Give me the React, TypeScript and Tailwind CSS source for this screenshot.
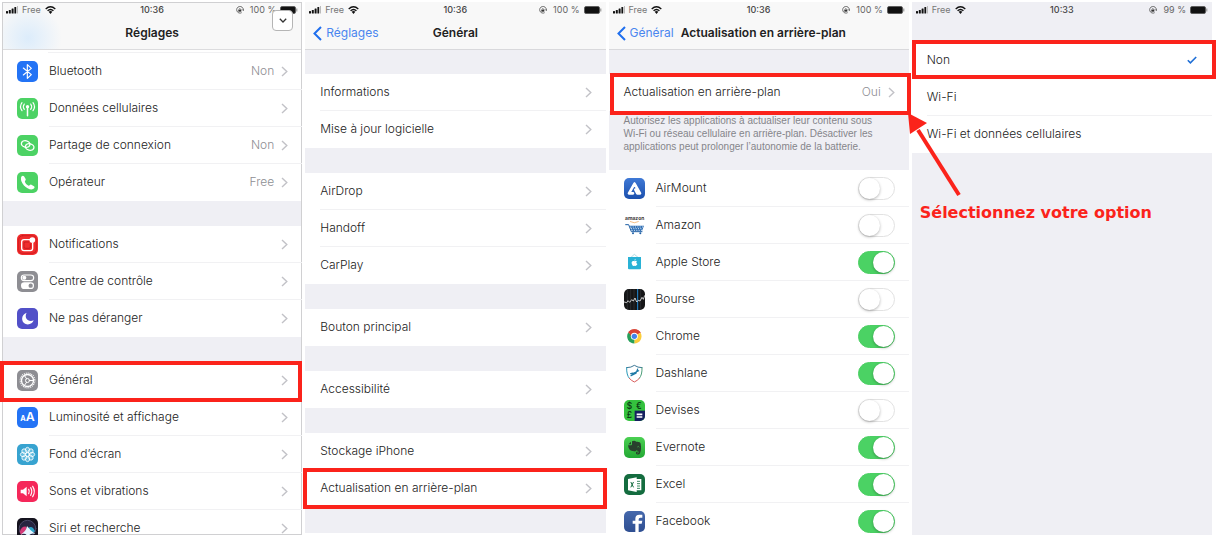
import { useState, type ReactNode } from "react";
import clsx from "clsx";

/* ---------- icons ---------- */

interface TileProps {
    className?: string;
    children: ReactNode;
}

function Tile({ className, children }: TileProps) {
    return (
        <svg
            viewBox="0 0 63 63"
            className={clsx("size-[21px] shrink-0 rounded-[5px]", className)}
            fill="none"
            stroke="#fff"
            strokeWidth={4}
            strokeLinecap="round"
            strokeLinejoin="round"
            aria-hidden="true"
        >
            {children}
        </svg>
    );
}

const BluetoothIcon = () => (
    <Tile className="bg-[#2373f5]">
        <path d="M19 21 L43 41 L31 52 V11 L43 22 L19 42" strokeWidth={3.5} />
    </Tile>
);

const CellularIcon = () => (
    <Tile className="bg-[#4cd264]">
        <path d="M31.500 30 V53" strokeWidth={4.500} />
        <circle cx="31.500" cy="26" r="5" fill="#fff" stroke="none" />
        <path d="M22 18 Q16 26 22 34 M15 14 Q6 26 15 38 M41 18 Q47 26 41 34 M48 14 Q57 26 48 38" strokeWidth={3.500} />
    </Tile>
);

const HotspotIcon = () => (
    <Tile className="bg-[#4cd264]">
        <ellipse cx="26" cy="27" rx="13" ry="9.500" transform="rotate(12 26 27)" />
        <ellipse cx="38" cy="36" rx="13" ry="9.500" transform="rotate(12 38 36)" />
    </Tile>
);

const PhoneIcon = () => (
    <Tile className="bg-[#4cd264]">
        <path
            d="M12 17 C13 12 18 9 21 13 L26 21 C28 25 22 27 24 30 C26 35 30 39 35 41 C38 42 39 36 43 38 L51 43 C55 46 51 51 46 52 C30 54 9 32 12 17 Z"
            fill="#fff"
            stroke="none"
        />
    </Tile>
);

const NotificationsIcon = () => (
    <Tile className="bg-[#f02d2d]">
        <rect x="5" y="5" width="53" height="53" rx="12" stroke="#c4161c" strokeWidth={2} />
        <path d="M38 17 H21 Q14 17 14 24 V43 Q14 50 21 50 H40 Q47 50 47 43 V27" strokeWidth={4} />
        <path d="M35 24 H25 Q21 24 21 28 V39 Q21 43 25 43 H36 Q40 43 40 39 V29" stroke="#b51218" strokeWidth={2} />
        <circle cx="46" cy="18" r="8.500" fill="#fff" stroke="none" />
    </Tile>
);

const ControlCenterIcon = () => (
    <Tile className="bg-[#8e8e93]">
        <rect x="13" y="12" width="37" height="17" rx="8.500" strokeWidth={3.500} />
        <circle cx="22" cy="20.500" r="6" fill="#fff" stroke="none" />
        <rect x="12" y="34" width="39" height="20" rx="10" fill="#fff" stroke="none" />
        <circle cx="41" cy="44" r="6.500" fill="#8e8e93" stroke="none" />
    </Tile>
);

const MoonIcon = () => (
    <Tile className="bg-[#5250c8]">
        <path d="M29 14 C12 19 11 42 26 48 C36 52 47 46 50 37 C34 44 20 30 29 14 Z" fill="#fff" stroke="none" />
    </Tile>
);

const GearIcon = () => (
    <Tile className="bg-[#8e8e93]">
        <circle cx="31.500" cy="31.500" r="22" strokeWidth={4} strokeDasharray="2.600 3.160" strokeLinecap="butt" />
        <circle cx="31.500" cy="31.500" r="18" strokeWidth={4} />
        <circle cx="31.500" cy="31.500" r="6" strokeWidth={3} />
        <path d="M37 31.500 H49 M28.500 26 L22 16 M28.500 37 L22 47" strokeWidth={3} />
    </Tile>
);

const DisplayIcon = () => (
    <Tile className="bg-[#2373f5]">
        <text x="10" y="43" fontSize="22" fontWeight="700" fill="#fff" stroke="none" fontFamily="Inter, sans-serif">A</text>
        <text x="26" y="43" fontSize="37" fontWeight="600" fill="#fff" stroke="none" fontFamily="Inter, sans-serif">A</text>
    </Tile>
);

const WallpaperIcon = () => (
    <Tile className="bg-[#37a3d0]">
        {[0, 45, 90, 135, 180, 225, 270, 315].map((angle) => (
            <ellipse
                key={angle}
                cx="31.500"
                cy="18"
                rx="6.500"
                ry="8"
                strokeWidth={2.5}
                fill="#8fd3ec"
                fillOpacity={0.5}
                transform={`rotate(${angle} 31.5 31.5)`}
            />
        ))}
        <circle cx="31.500" cy="31.500" r="5.500" strokeWidth={2.500} />
    </Tile>
);

const SoundIcon = () => (
    <Tile className="bg-[#f5285a]">
        <path d="M11 26 H18 L29 17 V46 L18 37 H11 Z" fill="#fff" stroke="none" />
        <path d="M35 25 Q39 31.500 35 38 M41 20 Q48 31.500 41 43 M47 16 Q57 31.500 47 47" strokeWidth={3.500} />
    </Tile>
);

const SiriIcon = () => (
    <Tile className="bg-[#15131f]">
        <circle cx="31.500" cy="32" r="25" stroke="#4d4a68" strokeWidth={3} fill="#272440" />
        <path d="M8 42 Q14 24 27 26 L31 34 Q22 46 12 50 Z" fill="#d23a78" stroke="none" />
        <path d="M33 30 Q46 20 54 40 L44 48 Z" fill="#2fa6c9" stroke="none" />
        <path d="M30 24 Q38 36 55 48 Q40 42 32 58 Q28 42 10 50 Q28 40 30 24 Z" fill="#e6f4ff" stroke="none" />
    </Tile>
);

const AirMountIcon = () => (
    <Tile className="bg-linear-to-b from-[#3f79d6] to-[#1c50ad]">
        <path d="M31.500 17 L15 46 H27 M31.500 17 L48 46 H40 L34 35" strokeWidth={8} />
    </Tile>
);

const AmazonIcon = () => (
    <Tile>
        <text x="3" y="15" fontSize="15" fontWeight="700" fill="#3c3a3a" stroke="none" fontFamily="Inter, sans-serif">amazon</text>
        <path d="M19 20 Q31 27 43 20" stroke="#f0a04b" strokeWidth={2} />
        <path d="M5 29 H14 L22 50 H54" stroke="#1f5fa5" strokeWidth={3} />
        <path d="M17 32 H60 L54 48 H23 Z" fill="#2b6cb3" stroke="none" />
        <path d="M20 36 H58 M22 41 H56 M24 46 H54" stroke="#fff" strokeWidth={2.500} strokeDasharray="1 6" />
        <circle cx="27" cy="55" r="3" fill="#1f5fa5" stroke="none" />
        <circle cx="49" cy="55" r="3" fill="#1f5fa5" stroke="none" />
    </Tile>
);

const AppleStoreIcon = () => (
    <Tile>
        <path d="M21 16 L31 7 L42 16" stroke="#8ccbd8" strokeWidth={2} />
        <path d="M12 15 H51 V49 Q51 52 48 52 H15 Q12 52 12 49 Z" fill="#29b2d6" stroke="none" />
        <path
            d="M31 28 C26 25 22 29 23 34 C24 39 27 43 29 42 Q31 41 33 42 C36 43 39 39 40 36 C36 34 36 30 39 28 C37 25 34 26 31 28 Z M31 26 Q31 21 35 20 Q35 25 31 26 Z"
            fill="#fff"
            stroke="none"
        />
    </Tile>
);

const StocksIcon = () => (
    <Tile className="bg-[#151617]">
        <path d="M10 0 V63 M20 0 V63 M30 0 V63 M50 0 V63" stroke="#34373a" strokeWidth={2} />
        <path d="M41 0 V63" stroke="#2089d5" strokeWidth={3} />
        <path d="M1 39 L8 41 L12 35 L17 40 L23 32 L28 36 L33 27 L38 39 L43 34 L48 36 L54 25 L58 31 L62 20" strokeWidth={2.500} stroke="#ececec" />
    </Tile>
);

const ChromeIcon = () => (
    <Tile>
        <path d="M31 31 L12.300 20.200 A21.600 21.600 0 0 1 49.700 20.200 Z" fill="#d94335" stroke="none" />
        <path d="M31 31 L49.700 20.200 A21.600 21.600 0 0 1 31 52.600 Z" fill="#fccd3b" stroke="none" />
        <path d="M31 31 L31 52.600 A21.600 21.600 0 0 1 12.300 20.200 Z" fill="#27a05a" stroke="none" />
        <path d="M31 21 H50 L49.700 20.200 A21.600 21.600 0 0 0 14 18 L22 33 Z" fill="#d94335" stroke="none" />
        <circle cx="31" cy="31" r="10.500" fill="#fff" stroke="none" />
        <circle cx="31" cy="31" r="8" fill="#4182ec" stroke="none" />
    </Tile>
);

const DashlaneIcon = () => (
    <Tile>
        <path d="M8 14 Q22 14 31 7 Q41 14 54 14" stroke="#3c7795" strokeWidth={3} />
        <path d="M8 14 Q7 36 16 46" stroke="#2998b8" strokeWidth={3} />
        <path d="M54 14 Q55 36 46 46" stroke="#4c9e7a" strokeWidth={3} />
        <path d="M16 46 Q22 53 31 57 Q40 53 46 46" stroke="#d85b5a" strokeWidth={3} />
        <path d="M41 18 L36 31 L21 38 L30 30 L44 23 M20 32 L27 30" stroke="#1f7aa6" strokeWidth={3.500} />
    </Tile>
);

const CurrencyIcon = () => (
    <Tile className="bg-[#34c13e]">
        <rect x="32" y="32" width="31" height="31" fill="#14205f" stroke="none" />
        <path d="M38 43 H55 M38 51 H55" strokeWidth={5} strokeLinecap="butt" />
        <g fill="#0c3e15" stroke="none" fontSize="25" fontWeight="600" fontFamily="Inter, sans-serif">
            <text x="8" y="26">$</text>
            <text x="36" y="26">€</text>
            <text x="8" y="55">£</text>
        </g>
    </Tile>
);

const EvernoteIcon = () => (
    <Tile className="bg-linear-to-b from-[#4ad052] to-[#22a834]">
        <path
            d="M24 13 Q31 9 37 14 Q49 13 50 20 Q53 38 48 49 Q46 54 38 52 Q35 51 36 46 Q37 43 42 44 V47 Q39 46 39 49 Q43 50 44 46 Q44 41 37 40 Q36 44 31 43 Q18 43 14 33 L12 25 H22 Q24 24 24 21 Z"
            fill="#29402d"
            stroke="none"
        />
        <path d="M13 22 L21 14 V22 Z" fill="#29402d" stroke="none" />
        <path d="M41 29 Q43 26 45 30" stroke="#4ad052" strokeWidth={2} />
    </Tile>
);

const ExcelIcon = () => (
    <Tile className="bg-[#146c3f]">
        <path d="M35 15 H52 V49 H35 Z" fill="#fff" stroke="none" />
        <path d="M39 22 H48 M39 29 H48 M39 36 H48 M39 43 H48" stroke="#3c8a62" strokeWidth={3} strokeLinecap="butt" />
        <path d="M12 15 L38 10 V54 L12 49 Z" fill="#fff" stroke="none" />
        <path d="M21 25 L28 39 M28 25 L21 39" stroke="#146c3f" strokeWidth={3} />
    </Tile>
);

const FacebookIcon = () => (
    <Tile className="bg-linear-to-b from-[#4568ac] to-[#2f4f92]">
        <path
            d="M34 63 V38 H26 V29 H34 V23 Q34 11 46 11 H55 V20 H49 Q44 20 44 25 V29 H55 L53 38 H44 V63 Z"
            fill="#fff"
            stroke="none"
        />
    </Tile>
);

const Chevron = () => (
    <svg viewBox="0 0 7 11" className="h-[11px] w-[7px] shrink-0" fill="none" stroke="#c2c2c7" strokeWidth={1.4} aria-hidden="true">
        <path d="M1 1 L5.800 5.500 L1 10" />
    </svg>
);

/* ---------- building blocks ---------- */

function StatusBar({ time, battery }: { time: string; battery: string }) {
    return (
        <div className="grid h-[15px] grid-cols-[1fr_auto_1fr] items-center px-1 text-[9px] leading-none font-normal text-[#444]">
            <div className="flex items-center gap-1">
                <svg viewBox="0 0 12 8" className="h-2 w-3" fill="#111" aria-hidden="true">
                    <rect x="0" y="5" width="2" height="2.500" rx=".5" />
                    <rect x="2.800" y="4" width="2" height="3.500" rx=".5" />
                    <rect x="5.600" y="2.500" width="2" height="5" rx=".5" />
                    <rect x="8.400" y="1" width="1.800" height="6.500" rx=".5" />
                    <rect x="11" y="0" width="1" height="7.500" fill="#bbb" />
                </svg>
                <span className="text-[#777]">Free</span>
                <svg viewBox="0 0 20 15" className="h-2 w-[11px]" fill="none" stroke="#111" strokeWidth={2.6} aria-hidden="true">
                    <path d="M1 5.500 Q10 -2.500 19 5.500 M4.500 9 Q10 4 15.500 9" />
                    <path d="M6.500 11 Q10 8 13.500 11 L10 15 Z" fill="#111" stroke="none" />
                </svg>
            </div>
            <span className="font-medium">{time}</span>
            <div className="flex items-center justify-end gap-1 text-[#666]">
                <svg viewBox="0 0 24 24" className="mr-0.5 size-2" fill="none" stroke="#555" strokeWidth={2.5} aria-hidden="true">
                    <path d="M17 20 A10 10 0 1 1 22 11 M18 10 L22 14 L24 9" />
                    <rect x="7" y="11" width="9" height="6" fill="#333" stroke="none" />
                    <path d="M9 11 V9 Q11.500 5 14 9 V11" strokeWidth={2} />
                </svg>
                <span>{battery}</span>
                <svg viewBox="0 0 18 8" className="h-2 w-[18px]" aria-hidden="true">
                    <rect x=".5" y=".5" width="15" height="7" rx="1.500" fill="#111" stroke="#555" strokeWidth=".8" />
                    <path d="M16.800 2.500 V5.500" stroke="#888" strokeWidth="1" />
                </svg>
            </div>
        </div>
    );
}

function BackButton({ label }: { label: string }) {
    return (
        <button type="button" className="flex items-center gap-1 font-normal text-[#4a86ef]">
            <svg viewBox="0 0 9 15" className="h-[15px] w-[9px]" fill="none" stroke="#1f6fee" strokeWidth={2} aria-hidden="true">
                <path d="M8 1 L1.500 7.500 L8 14" />
            </svg>
            {label}
        </button>
    );
}

// Red frame drawn around a row
function Highlight({ className }: { className: string }) {
    return <span className={clsx("pointer-events-none absolute z-10 border-4 border-[#fb231b]", className)} />;
}

interface RowProps {
    label: string;
    icon?: ReactNode;
    value?: string;
    highlight?: string;
}

function Row({ label, icon, value, highlight }: RowProps) {
    return (
        <li className="group relative">
            <button type="button" className="flex h-[37px] w-full items-center gap-[11px] pl-[15px] text-left">
                {icon}
                <span className="flex h-full flex-1 items-center gap-[7px] border-b border-[#f1f1f3] pr-[14px] group-last:border-transparent">
                    <span className="flex-1">{label}</span>
                    {value && <span className="text-[#8e8e93]">{value}</span>}
                    <Chevron />
                </span>
            </button>
            {highlight && <Highlight className={highlight} />}
        </li>
    );
}

function Section({ rows }: { rows: RowProps[] }) {
    return (
        <ul className="bg-white">
            {rows.map((row) => (
                <Row key={row.label} {...row} />
            ))}
        </ul>
    );
}

interface AppRowProps {
    label: string;
    icon: ReactNode;
    enabled: boolean;
}

function AppRow({ label, icon, enabled }: AppRowProps) {
    const [checked, setChecked] = useState(enabled);

    return (
        <li className="group">
            <label className="flex h-[37px] items-center gap-[11px] pl-[15px]">
                {icon}
                <span className="flex h-full flex-1 items-center justify-between border-b border-[#f1f1f3] pr-[14px] group-last:border-transparent">
                    {label}
                    <input
                        type="checkbox"
                        checked={checked}
                        onChange={(e) => setChecked(e.target.checked)}
                        className="h-[23px] w-[37px] appearance-none rounded-full border border-[#e2e2e2] bg-white before:block before:size-[21px] before:rounded-full before:bg-white before:shadow-[0_1px_3px_rgba(0,0,0,0.3)] checked:border-[#4bcf63] checked:bg-[#4bd264] checked:before:ml-[14px]"
                    />
                </span>
            </label>
        </li>
    );
}

/* ---------- data ---------- */

const networkRows: RowProps[] = [
    { label: "Bluetooth", icon: <BluetoothIcon />, value: "Non" },
    { label: "Données cellulaires", icon: <CellularIcon /> },
    { label: "Partage de connexion", icon: <HotspotIcon />, value: "Non" },
    { label: "Opérateur", icon: <PhoneIcon />, value: "Free" },
];

const alertRows: RowProps[] = [
    { label: "Notifications", icon: <NotificationsIcon /> },
    { label: "Centre de contrôle", icon: <ControlCenterIcon /> },
    { label: "Ne pas déranger", icon: <MoonIcon /> },
];

const deviceRows: RowProps[] = [
    { label: "Général", icon: <GearIcon />, highlight: "-top-px -bottom-[3px] -left-0.5 right-0" },
    { label: "Luminosité et affichage", icon: <DisplayIcon /> },
    { label: "Fond d’écran", icon: <WallpaperIcon /> },
    { label: "Sons et vibrations", icon: <SoundIcon /> },
    { label: "Siri et recherche", icon: <SiriIcon /> },
];

const generalSections: RowProps[][] = [
    [{ label: "Informations" }, { label: "Mise à jour logicielle" }],
    [{ label: "AirDrop" }, { label: "Handoff" }, { label: "CarPlay" }],
    [{ label: "Bouton principal" }],
    [{ label: "Accessibilité" }],
    [
        { label: "Stockage iPhone" },
        { label: "Actualisation en arrière-plan", highlight: "-inset-y-0.5 -left-0.5 -right-px" },
    ],
];

const apps: AppRowProps[] = [
    { label: "AirMount", icon: <AirMountIcon />, enabled: false },
    { label: "Amazon", icon: <AmazonIcon />, enabled: false },
    { label: "Apple Store", icon: <AppleStoreIcon />, enabled: true },
    { label: "Bourse", icon: <StocksIcon />, enabled: false },
    { label: "Chrome", icon: <ChromeIcon />, enabled: true },
    { label: "Dashlane", icon: <DashlaneIcon />, enabled: true },
    { label: "Devises", icon: <CurrencyIcon />, enabled: false },
    { label: "Evernote", icon: <EvernoteIcon />, enabled: true },
    { label: "Excel", icon: <ExcelIcon />, enabled: true },
    { label: "Facebook", icon: <FacebookIcon />, enabled: true },
];

const refreshOptions = ["Non", "Wi-Fi", "Wi-Fi et données cellulaires"];

/* ---------- screens ---------- */

function SettingsScreen() {
    return (
        <section className="relative overflow-y-clip bg-[#efeff4] outline -outline-offset-1 outline-[#d0d0d2]">
            <header className="border-b border-[#dcdcde] bg-[#f8f8f8] bg-[radial-gradient(circle_at_26px_36px,#dcecfb,transparent_34px)]">
                <StatusBar time="10:36" battery="100 %" />
                <h1 className="flex h-8 items-center justify-center font-semibold text-[#222]">Réglages</h1>
            </header>
            <button
                type="button"
                aria-label="Réduire"
                className="absolute top-2 right-[9px] flex size-[21px] items-center justify-center rounded-[4px] border border-[#b5b5b5] bg-white"
            >
                <svg viewBox="0 0 8 5" className="h-[5px] w-2" fill="none" stroke="#333" strokeWidth={1.3} aria-hidden="true">
                    <path d="M.8 .8 L4 4 L7.200 .8" />
                </svg>
            </button>
            <div className="bg-white pt-0.5 pl-[46px]">
                <div className="border-b border-[#f1f1f3]" />
            </div>
            <div className="flex flex-col gap-[25px]">
                <Section rows={networkRows} />
                <Section rows={alertRows} />
                <Section rows={deviceRows} />
            </div>
        </section>
    );
}

function GeneralScreen() {
    return (
        <section className="mb-0.5 bg-[#efeff4]">
            <header className="border-b border-[#d9d9dc] bg-[#f8f8f8]">
                <StatusBar time="10:36" battery="100 %" />
                <div className="grid h-8 grid-cols-[1fr_auto_1fr] items-center px-2">
                    <BackButton label="Réglages" />
                    <h2 className="font-semibold text-[#222]">Général</h2>
                </div>
            </header>
            <div className="flex flex-col gap-[25px] pt-6">
                {generalSections.map((rows) => (
                    <Section key={rows[0].label} rows={rows} />
                ))}
            </div>
        </section>
    );
}

function BackgroundRefreshScreen() {
    return (
        <section className="overflow-y-clip bg-[#efeff4]">
            <header className="border-b border-[#d9d9dc] bg-[#f8f8f8]">
                <StatusBar time="10:36" battery="100 %" />
                <div className="flex h-8 items-center gap-[7px] px-2">
                    <BackButton label="Général" />
                    <h2 className="font-semibold text-[#222]">Actualisation en arrière-plan</h2>
                </div>
            </header>
            <div className="pt-6">
                <Section
                    rows={[
                        {
                            label: "Actualisation en arrière-plan",
                            value: "Oui",
                            highlight: "-top-px -bottom-1 left-px -right-0.5",
                        },
                    ]}
                />
            </div>
            <p className="px-[15px] pt-[3px] pb-[17px] font-['Liberation_Sans',Arial,sans-serif] text-[10px] leading-[13px] font-normal text-[#85858a]">
                Autorisez les applications à actualiser leur contenu sous
                <br />
                Wi-Fi ou réseau cellulaire en arrière-plan. Désactiver les
                <br />
                applications peut prolonger l’autonomie de la batterie.
            </p>
            <ul className="bg-white">
                {apps.map((app) => (
                    <AppRow key={app.label} {...app} />
                ))}
            </ul>
        </section>
    );
}

function RefreshOptionsScreen() {
    const [selected, setSelected] = useState("Non");

    return (
        <section className="relative bg-[#efeff4]">
            <StatusBar time="10:33" battery="99 %" />
            <fieldset className="mt-[25px] bg-white">
                {refreshOptions.map((option, index) => (
                    <label key={option} className="group relative flex h-[37px] pl-[15px]">
                        <input
                            type="radio"
                            name="refresh"
                            className="sr-only"
                            checked={selected === option}
                            onChange={() => setSelected(option)}
                        />
                        <span className="flex flex-1 items-center justify-between border-b border-[#f1f1f3] pr-[15px] group-last:border-transparent">
                            {option}
                            {selected === option && (
                                <svg viewBox="0 0 10 8" className="h-2 w-2.5" fill="none" stroke="#1f6fd6" strokeWidth={1.6} aria-hidden="true">
                                    <path d="M.8 4.200 L3.400 6.800 L9.200 1" />
                                </svg>
                            )}
                        </span>
                        {index === 0 && <Highlight className="-top-0.5 bottom-0 left-0 -right-1" />}
                    </label>
                ))}
            </fieldset>
            {/* arrow from the note back to the highlighted row */}
            <svg viewBox="0 0 54 86" className="absolute top-[110px] -left-1 z-20 h-[86px] w-[54px]" aria-hidden="true">
                <path d="M51 83 L10 18" stroke="#fb231b" strokeWidth="4" fill="none" />
                <path d="M0 1 L19 11 L2 22 Z" fill="#fb231b" />
            </svg>
            <p className="pt-12 pl-2 font-['DejaVu_Sans',Verdana,sans-serif] text-base leading-6 font-bold whitespace-nowrap text-[#fb231b]">
                Sélectionnez votre option
            </p>
        </section>
    );
}

export default function App() {
    return (
        <main className="grid h-screen grid-cols-4 grid-rows-[minmax(0,1fr)] gap-[3px] bg-white pt-0.5 pr-1 pb-[3px] pl-0.5 font-[Inter,sans-serif] text-[12px] font-light text-[#222]">
            <SettingsScreen />
            <GeneralScreen />
            <BackgroundRefreshScreen />
            <RefreshOptionsScreen />
        </main>
    );
}
